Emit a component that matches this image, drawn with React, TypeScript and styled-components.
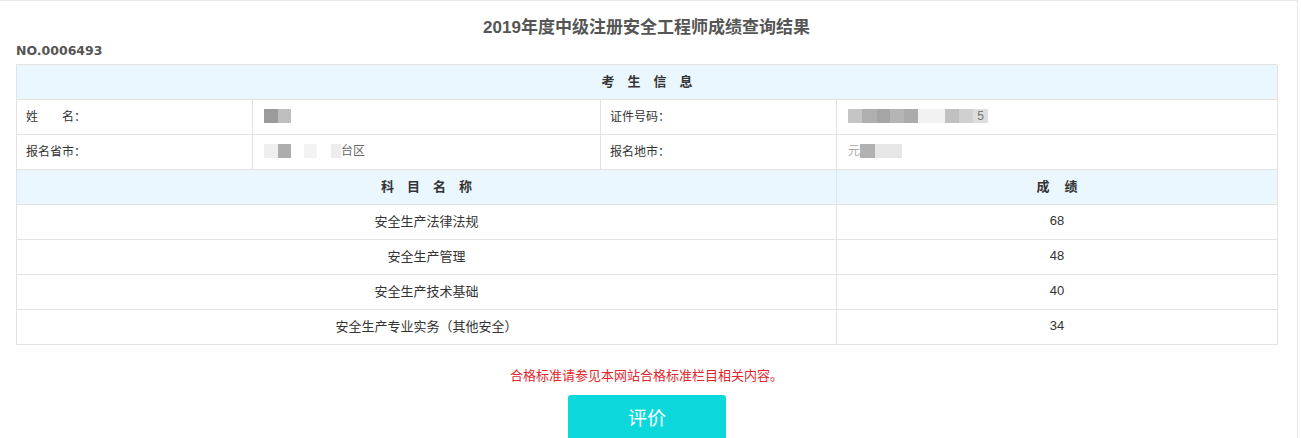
import React from "react";
import styled, { createGlobalStyle } from "styled-components";

const GlobalStyle = createGlobalStyle`
  html, body {
    margin: 0;
    padding: 0;
    background: #ffffff;
  }
  body {
    font-family: "Liberation Sans", "Noto Sans CJK SC", sans-serif;
    color: #333333;
  }
`;

const Page = styled.div`
  box-sizing: border-box;
  width: 1298px;
  min-height: 438px;
  border-top: 1px solid #e9e9e9;
  border-right: 1px solid #e9e9e9;
  padding: 0 20px 0 16px;
  display: flex;
  flex-direction: column;
`;

const Title = styled.h1`
  margin: 17px 0 0;
  font-size: 17px;
  line-height: 20px;
  font-weight: bold;
  color: #555555;
  text-align: center;
`;

const SerialNo = styled.div`
  margin-top: 5px;
  margin-bottom: 5px;
  font-family: "DejaVu Sans", "Liberation Sans", sans-serif;
  font-size: 12.5px;
  line-height: 16px;
  font-weight: bold;
  color: #555555;
`;

const Table = styled.div`
  display: grid;
  grid-template-columns: 236px 348px 236px 441px;
  grid-auto-rows: 35px;
  border-top: 1px solid #e3e3e3;
  border-left: 1px solid #e3e3e3;
`;

const Cell = styled.div<{ $span?: number; $align?: "left" | "center" }>`
  box-sizing: border-box;
  grid-column: span ${(p) => p.$span ?? 1};
  display: flex;
  align-items: center;
  justify-content: ${(p) => (p.$align === "left" ? "flex-start" : "center")};
  padding: ${(p) => (p.$align === "left" ? "0 0 3px 9px" : "0 0 3px")};
  border-right: 1px solid #e3e3e3;
  border-bottom: 1px solid #e3e3e3;
  font-size: 13px;
  color: #333333;
  background: #ffffff;
  white-space: nowrap;
`;

const HeadCell = styled(Cell)`
  background: #eaf7fe;
  font-weight: bold;
  color: #333333;
`;

const Spaced = styled.span<{ $gap: number }>`
  letter-spacing: ${(p) => p.$gap}px;
  margin-right: -${(p) => p.$gap}px;
`;

const Label = styled.span`
  font-size: 12px;
  color: #333333;
`;

const Redacted = styled.span`
  display: inline-flex;
  align-items: center;
  height: 14px;
  margin-left: 2px;
`;

const Block = styled.span<{ $w: number; $c: string }>`
  display: inline-block;
  width: ${(p) => p.$w}px;
  height: 14px;
  background: ${(p) => p.$c};
`;

const BlurText = styled.span<{ $c: string }>`
  font-size: 12px;
  line-height: 14px;
  color: ${(p) => p.$c};
`;

const Note = styled.p`
  margin: 23px 0 0;
  text-align: center;
  font-size: 13px;
  line-height: 16px;
  color: #e3262c;
`;

const ButtonRow = styled.div`
  display: flex;
  justify-content: center;
  margin-top: 11px;
  padding-left: 1px;
`;

const RateButton = styled.button`
  width: 158px;
  height: 46px;
  padding: 0 0 4px;
  border: none;
  border-radius: 3px;
  background: #0cd8dc;
  color: #ffffff;
  font-family: "Noto Sans CJK SC", sans-serif;
  font-size: 19px;
  cursor: pointer;
`;

type Piece = { w?: number; c: string; t?: string };

const Masked = ({ pieces }: { pieces: Piece[] }) => (
  <Redacted>
    {pieces.map((p, i) =>
      p.t ? (
        <BlurText key={i} $c={p.c}>
          {p.t}
        </BlurText>
      ) : (
        <Block key={i} $w={p.w ?? 14} $c={p.c} />
      )
    )}
  </Redacted>
);

const nameMask: Piece[] = [
  { w: 14, c: "#9b9b9b" },
  { w: 13, c: "#bebebe" },
];

const provinceMask: Piece[] = [
  { w: 14, c: "#efefef" },
  { w: 13, c: "#adadad" },
  { w: 13, c: "#ffffff" },
  { w: 13, c: "#f3f3f3" },
  { w: 14, c: "#ffffff" },
  { w: 10, c: "#ededed" },
  { c: "#666666", t: "台区" },
];

const idMask: Piece[] = [
  { w: 14, c: "#c5c5c5" },
  { w: 15, c: "#afafaf" },
  { w: 13, c: "#a5a5a5" },
  { w: 14, c: "#b5b5b5" },
  { w: 14, c: "#ababab" },
  { w: 27, c: "#f2f2f2" },
  { w: 14, c: "#c1c1c1" },
  { w: 14, c: "#d0d0d0" },
];

const cityMask: Piece[] = [
  { c: "#a8a8a8", t: "元" },
  { w: 15, c: "#b1b1b1" },
  { w: 27, c: "#e6e6e6" },
];

const IdTail = styled.span`
  display: inline-flex;
  align-items: center;
  justify-content: center;
  width: 15px;
  height: 14px;
  background: #dddddd;
  color: #777777;
  font-size: 12px;
`;

const scores = [
  { subject: "安全生产法律法规", score: 68 },
  { subject: "安全生产管理", score: 48 },
  { subject: "安全生产技术基础", score: 40 },
  { subject: "安全生产专业实务（其他安全）", score: 34 },
];

export default function App() {
  return (
    <>
      <GlobalStyle />
      <Page>
        <Title>2019年度中级注册安全工程师成绩查询结果</Title>
        <SerialNo>NO.0006493</SerialNo>
        <Table>
          <HeadCell $span={4}>
            <Spaced $gap={13}>考生信息</Spaced>
          </HeadCell>

          <Cell $align="left">
            <Label>姓　　名：</Label>
          </Cell>
          <Cell $align="left">
            <Masked pieces={nameMask} />
          </Cell>
          <Cell $align="left">
            <Label>证件号码：</Label>
          </Cell>
          <Cell $align="left">
            <Masked pieces={idMask} />
            <IdTail>5</IdTail>
          </Cell>

          <Cell $align="left">
            <Label>报名省市：</Label>
          </Cell>
          <Cell $align="left">
            <Masked pieces={provinceMask} />
          </Cell>
          <Cell $align="left">
            <Label>报名地市：</Label>
          </Cell>
          <Cell $align="left">
            <Masked pieces={cityMask} />
          </Cell>

          <HeadCell $span={3}>
            <Spaced $gap={13}>科目名称</Spaced>
          </HeadCell>
          <HeadCell>
            <Spaced $gap={15}>成绩</Spaced>
          </HeadCell>

          {scores.map((row) => (
            <React.Fragment key={row.subject}>
              <Cell $span={3}>{row.subject}</Cell>
              <Cell>{row.score}</Cell>
            </React.Fragment>
          ))}
        </Table>
        <Note>合格标准请参见本网站合格标准栏目相关内容。</Note>
        <ButtonRow>
          <RateButton type="button">评价</RateButton>
        </ButtonRow>
      </Page>
    </>
  );
}
